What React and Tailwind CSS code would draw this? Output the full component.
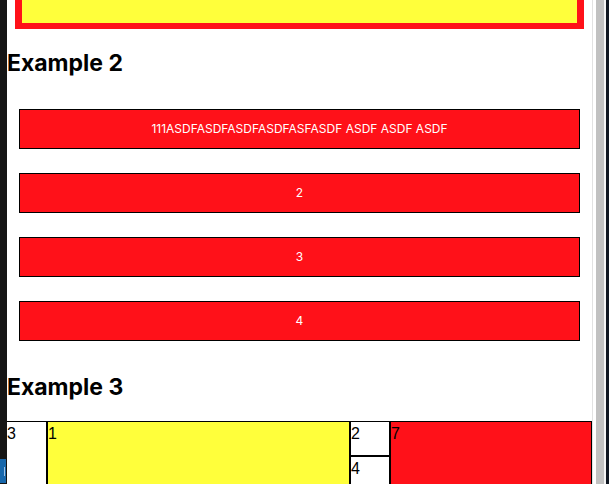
export default function App() {
  const boxes = ["111ASDFASDFASDFASDFASFASDF ASDF ASDF ASDF", "2", "3", "4"];
  return (
    <div className="flex h-[484px] w-[609px] overflow-hidden bg-white font-['Inter',sans-serif]">
      {/* left window edge */}
      <div className="flex w-[7px] shrink-0 flex-col bg-[#151515]">
        <div className="flex-1" />
        <div className="flex h-[24px] w-[6px] items-center bg-[#1767ab] pl-[4px]">
          <div className="h-[9px] w-px bg-[#9cc0e4]" />
        </div>
        <div className="h-px" />
      </div>

      {/* content */}
      <div className="flex w-[585px] shrink-0 flex-col overflow-hidden">
        <div className="mx-2 h-[29px] shrink-0 border-x-[7px] border-b-[6px] border-[#ff1119] bg-[#ffff3b]" />

        <h2 className="mt-[21px] text-[23px] font-bold leading-[26px] text-black">Example 2</h2>

        <div className="mx-3 mt-[33px] flex flex-col gap-6">
          {boxes.map((t) => (
            <div
              key={t}
              className="flex h-[40px] items-center justify-center border border-black bg-[#ff1119] text-[12px] text-white"
            >
              {t}
            </div>
          ))}
        </div>

        <h2 className="mt-[33px] text-[23px] font-bold leading-[26px] text-black">Example 3</h2>

        <div className="mt-[21px] grid grid-cols-[40px_303px_40px_202px] grid-rows-[35px_60px] font-['Liberation_Sans',Arial,sans-serif] text-[16px] leading-normal text-black">
          <div className="row-span-2 border border-l-0 border-black bg-white">3</div>
          <div className="row-span-2 border border-black bg-[#ffff3b]">1</div>
          <div className="border border-black bg-white">2</div>
          <div className="col-start-4 row-span-2 row-start-1 border border-black bg-[#ff1119]">7</div>
          <div className="col-start-3 row-start-2 border border-black bg-white">4</div>
        </div>
      </div>

      {/* scrollbar */}
      <div className="flex w-[17px] shrink-0">
        <div className="w-px bg-[#e2e2e2]" />
        <div className="w-[3px] bg-white" />
        <div className="w-[8px] bg-[#c1c1c1]" />
        <div className="w-[2px] bg-[#f4f4f4]" />
        <div className="flex-1 bg-[#0e1520]" />
      </div>
    </div>
  );
}
